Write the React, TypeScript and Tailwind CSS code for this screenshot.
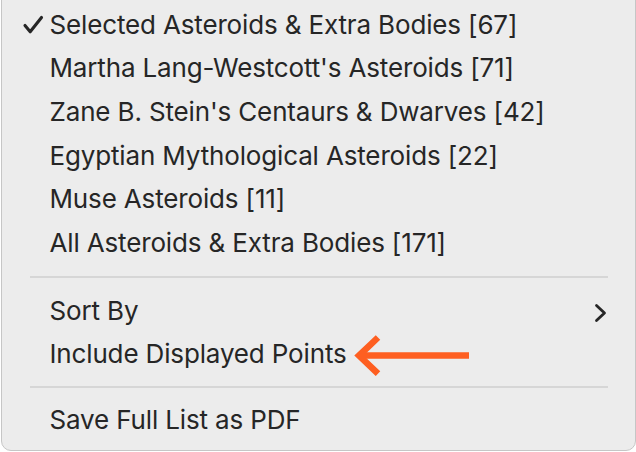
import React from "react";

const items = [
  "Selected Asteroids & Extra Bodies [67]",
  "Martha Lang-Westcott's Asteroids [71]",
  "Zane B. Stein's Centaurs & Dwarves [42]",
  "Egyptian Mythological Asteroids [22]",
  "Muse Asteroids [11]",
  "All Asteroids & Extra Bodies [171]",
];

function Row({ children, check, right }: { children: React.ReactNode; check?: boolean; right?: React.ReactNode }) {
  return (
    <div className="relative flex items-center h-[43.6px] leading-[43.6px]">
      <div className="w-[47.5px] shrink-0 flex items-center">
        {check && (
          <svg width="22" height="20" viewBox="0 0 22 20" className="ml-[20px]">
            <path d="M3 10.5 L8.2 16.8 L19.5 2.5" fill="none" stroke="#262626" strokeWidth="3.1" strokeLinecap="round" strokeLinejoin="round" />
          </svg>
        )}
      </div>
      <span className="whitespace-nowrap">{children}</span>
      {right}
    </div>
  );
}

export default function App() {
  return (
    <div className="w-[636px] h-[452px] bg-white overflow-hidden">
      <div
        className="ml-[1px] w-[635px] mt-[-20px] border border-[#c6c6c6] rounded-[10px] bg-[#ececec] pt-[21.8px] pb-[8.6px] text-[#262626] text-[26px] tracking-[-0.15px]"
        style={{ fontFamily: "Inter, 'Noto Sans', sans-serif" }}
      >
        {items.map((t, i) => (
          <Row key={t} check={i === 0}>
            {t}
          </Row>
        ))}
        <div className="h-[24.4px] pt-[11.6px]">
          <div className="h-[2px] bg-[#d6d6d6] ml-[28px] mr-[27px]" />
        </div>
        <Row
          right={
            <svg width="14" height="20" viewBox="0 0 14 20" className="absolute left-[591px] top-[14px]">
              <path d="M3.5 2.5 L11.5 10 L3.5 17.5" fill="none" stroke="#262626" strokeWidth="2.8" strokeLinecap="round" strokeLinejoin="round" />
            </svg>
          }
        >
          Sort By
        </Row>
        <Row
          right={
            <svg width="120" height="44" viewBox="0 0 120 44" className="absolute left-[349px] top-[0px]">
              <path d="M118 23.6 L10 23.6" fill="none" stroke="#fe5f21" strokeWidth="6.5" />
              <path d="M27 5.5 L8 23.6 L27 41.7" fill="none" stroke="#fe5f21" strokeWidth="6.5" strokeLinejoin="miter" />
            </svg>
          }
        >
          Include Displayed Points
        </Row>
        <div className="h-[21.8px] pt-[10px]">
          <div className="h-[2px] bg-[#d6d6d6] ml-[28px] mr-[27px]" />
        </div>
        <Row>Save Full List as PDF</Row>
      </div>
    </div>
  );
}
